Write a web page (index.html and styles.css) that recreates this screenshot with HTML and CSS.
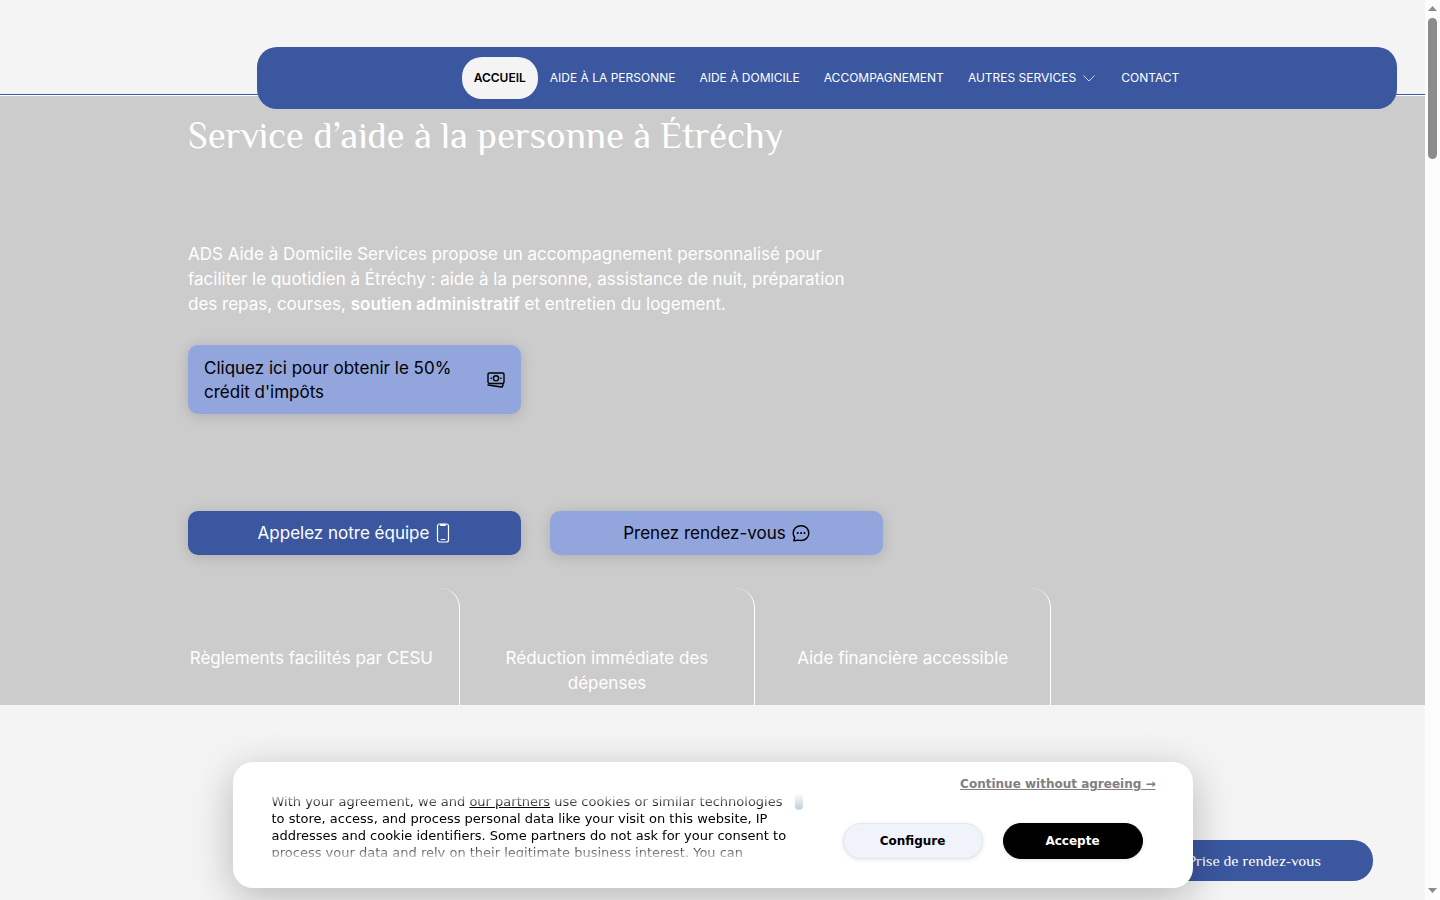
FILE: index.html
```html
<!DOCTYPE html>
<html lang="fr">
<head>
<meta charset="utf-8">
<title>ADS Aide à Domicile Services</title>
<link rel="stylesheet" href="styles.css">
</head>
<body>
<div class="site">
  <header class="header">
    <nav class="nav" aria-label="Menu principal">
      <a class="nav-link active" href="#">ACCUEIL</a>
      <a class="nav-link" href="#">AIDE À LA PERSONNE</a>
      <a class="nav-link" href="#">AIDE À DOMICILE</a>
      <a class="nav-link" href="#">ACCOMPAGNEMENT</a>
      <a class="nav-link" href="#">AUTRES SERVICES <svg class="chevron" viewBox="0 0 16 16" width="12" height="12" fill="none" stroke="currentColor" stroke-linecap="round" stroke-linejoin="round"><path d="M1 5l7 7 7-7"/></svg></a>
      <a class="nav-link" href="#">CONTACT</a>
    </nav>
  </header>
  <main>
    <section class="hero">
      <h1 class="title">Service d’aide à la personne à Étréchy</h1>
      <p class="intro">ADS Aide à Domicile Services propose un accompagnement personnalisé pour faciliter le quotidien à Étréchy : aide à la personne, assistance de nuit, préparation des repas, courses, <strong>soutien administratif</strong> et entretien du logement.</p>
      <div class="actions">
        <a class="button light wide-text" href="#"><span>Cliquez ici pour obtenir le 50% crédit d'impôts</span>
          <svg viewBox="0 0 18 18" width="18" height="18" fill="none" stroke="currentColor" stroke-width="1.4" stroke-linejoin="round" stroke-linecap="round"><rect x="1" y="2" width="16" height="10.500" rx="1.500"/><circle cx="9" cy="7.300" r="2.600"/><path d="M4 7.300h.4M13.600 7.300h.4M1 14l13.300 2q1.200.1 1.400-1L16 13.500"/></svg></a>
      </div>
      <div class="actions second">
        <a class="button dark" href="#">Appelez notre équipe
          <svg viewBox="0 0 16 20" width="16" height="20" fill="none" stroke="currentColor" stroke-width="1.200"><rect x="2.500" y="1" width="11" height="18" rx="2"/><path d="M5.800 1.600h4.400v.7H5.800zM6.200 16.500h3.600" stroke-linecap="round"/></svg></a>
        <a class="button light" href="#">Prenez rendez-vous
          <svg viewBox="0 0 18 18" width="18" height="18" fill="none" stroke="currentColor" stroke-width="1.400" stroke-linejoin="round"><path d="M2.700 13.500L1.800 16.800l4.500-.7c.9.300 1.800.4 2.800.4 4.400 0 7.700-3.200 7.700-7.400S13.500 1.700 9.100 1.700 1.200 4.800 1.200 9c0 1.700.5 3.200 1.500 4.500z"/><path d="M4.900 9h1.600M8.300 9h1.600M11.700 9h1.600" stroke-width="1.800"/></svg></a>
      </div>
      <ul class="benefits">
        <li class="benefit">Règlements facilités par CESU</li>
        <li class="benefit">Réduction immédiate des dépenses</li>
        <li class="benefit">Aide financière accessible</li>
      </ul>
    </section>
  </main>
  <a class="booking" href="#">Prise de rendez-vous</a>
  <section class="consent" role="dialog" aria-label="Cookies">
    <div class="consent-scroll">
      <p class="consent-text">With your agreement, we and <a href="#">our partners</a> use cookies or similar technologies to store, access, and process personal data like your visit on this website, IP addresses and cookie identifiers. Some partners do not ask for your consent to process your data and rely on their legitimate business interest. You can</p>
      <span class="consent-thumb"></span>
    </div>
    <div class="consent-side">
      <a class="decline" href="#">Continue without agreeing →</a>
      <div class="consent-buttons">
        <button class="pill configure" type="button">Configure</button>
        <button class="pill accept" type="button">Accepte</button>
      </div>
    </div>
  </section>
</div>
<div class="scrollbar" aria-hidden="true">
  <svg viewBox="0 0 9 5" width="9" height="5"><path d="M0 5L4.500 0 9 5z"/></svg>
  <span class="thumb"></span>
  <svg viewBox="0 0 9 5" width="9" height="5"><path d="M0 0L4.500 5 9 0z"/></svg>
</div>
</body>
</html>
```
FILE: styles.css
```css
* { box-sizing: border-box; }
body {
  margin: 0;
  height: 100vh;
  display: flex;
  overflow: hidden;
  background: #f4f4f4;
  font: 17px/25px Inter, sans-serif;
  color: #fff;
}
a { color: inherit; text-decoration: none; }
strong { font-weight: 600; }
.site { position: relative; flex: 1; min-width: 0; overflow: hidden; }
.header {
  height: 96px;
  padding: 47px 2% 0;
  border-bottom: 1px solid #fff;
  box-shadow: inset 0 -1px #3a57a0;
  display: flex;
  justify-content: flex-end;
  align-items: flex-start;
}
.nav {
  position: relative;
  z-index: 1;
  width: 80vw;
  max-width: 1140px;
  flex: none;
  min-height: 62px;
  display: flex;
  justify-content: center;
  align-items: center;
  background: #3a57a0;
  border-radius: 20px;
}
.nav-link {
  display: flex;
  align-items: center;
  gap: 7px;
  height: 42px;
  padding: 0 12px;
  border-radius: 20px;
  font-size: 12px;
  line-height: 24px;
  white-space: nowrap;
}
.chevron { margin-right: 2px; }
.active { background: #f4f4f4; color: #000; font-weight: 600; }
.hero { background: #ccc; padding: 16px 188px 0; }
.title {
  margin: 0;
  font: 400 37px/48px Philosopher, "Liberation Serif", serif;
}
.intro { margin: 82px 0 0; max-width: 676px; }
.actions { display: grid; grid-template-columns: 1fr 1fr; gap: 29px; max-width: 695px; margin-top: 28px; }
.second { margin-top: 97px; }
.button {
  display: flex;
  justify-content: center;
  align-items: center;
  gap: 6px;
  min-height: 44px;
  padding: 9px 16px;
  border-radius: 10px;
  box-shadow: 0 2px 14px rgba(0, 0, 0, .15);
}
.button svg { flex: none; }
.wide-text { justify-content: space-between; line-height: 24px; min-height: 69px; gap: 24px; }
.light { background: #92a6dd; color: #000; }
.dark { background: #3a57a0; }
.benefits {
  display: grid;
  grid-template-columns: repeat(3, 1fr);
  gap: 24px;
  max-width: 863px;
  margin: 33px 0 0;
  padding: 0;
  list-style: none;
}
.benefit {
  min-height: 117px;
  padding: 58px 24px 9px 0;
  border-right: 1px solid #fff;
  border-top-right-radius: 20px;
  text-align: center;
}
.booking {
  position: absolute;
  right: 52px;
  bottom: 19px;
  padding: 8px 52px;
  border-radius: 20px;
  background: #3a57a0;
  font: 15px/25px Philosopher, "Liberation Serif", serif;
}
.consent {
  position: absolute;
  left: 50%;
  bottom: 12px;
  width: 960px;
  min-height: 126px;
  margin-left: -480px;
  display: flex;
  justify-content: space-between;
  padding: 14px 37px 14px 39px;
  border-radius: 20px;
  background: #fff;
  color: #000;
  font: 13px/17px "DejaVu Sans", sans-serif;
  box-shadow: 0 10px 40px rgba(0, 0, 0, .25);
}
.consent-scroll {
  display: flex;
  gap: 7px;
  height: 64px;
  margin-top: 17px;
  width: 531px;
  overflow: hidden;
  -webkit-mask-image: linear-gradient(transparent, #000 14px, #000 50px, transparent 70px);
  mask-image: linear-gradient(transparent, #000 14px, #000 50px, transparent 70px);
}
.consent-text { width: 516px; flex: none; margin: 0; }
.consent-text a { text-decoration: underline; }
.consent-thumb { width: 8px; height: 17px; border-radius: 0 0 4px 4px; background: #cbd5e1; }
.consent-side { display: flex; flex-direction: column; align-items: flex-end; gap: 30px; }
.decline { color: #808080; font-size: 12px; font-weight: 700; text-decoration: underline; }
.consent-buttons { display: flex; gap: 20px; padding-right: 13px; }
.pill {
  width: 140px;
  height: 36px;
  border: 1px solid #e2e6ef;
  border-radius: 18px;
  font: 700 12px "DejaVu Sans", sans-serif;
  box-shadow: 0 1px 4px rgba(0, 0, 0, .1);
}
.configure { background: #f0f4fa; color: #000; }
.accept { background: #000; border-color: #000; color: #fff; }
.scrollbar {
  width: 15px;
  display: flex;
  flex-direction: column;
  align-items: center;
  gap: 7px;
  padding: 6px 0 7px;
  background: #fcfcfc;
  fill: #8b8b8b;
}
.thumb { width: 9px; height: 141px; margin-bottom: auto; border-radius: 5px; background: #8b8b8b; }
```
